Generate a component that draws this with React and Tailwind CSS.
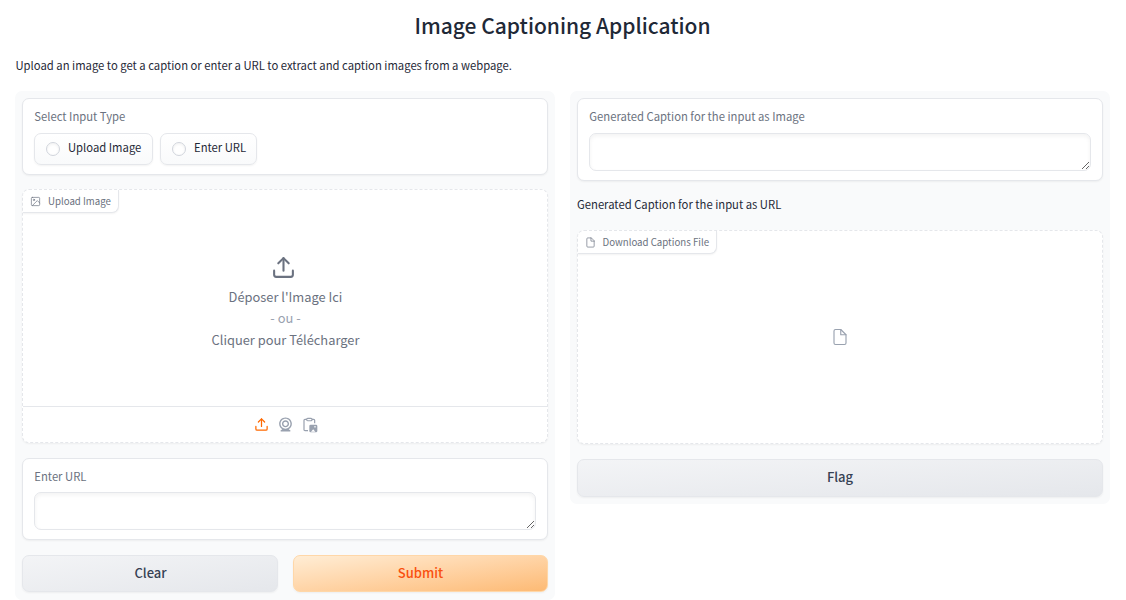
const feather = {
  viewBox: "0 0 24 24",
  fill: "none",
  stroke: "currentColor",
  strokeLinecap: "round",
  strokeLinejoin: "round",
};

function UploadIcon({ className, strokeWidth = 2 }) {
  return (
    <svg {...feather} strokeWidth={strokeWidth} className={className}>
      <path d="M21 15v4a2 2 0 0 1-2 2H5a2 2 0 0 1-2-2v-4" />
      <polyline points="17 8 12 3 7 8" />
      <line x1="12" y1="3" x2="12" y2="15" />
    </svg>
  );
}

function ImageIcon({ className }) {
  return (
    <svg {...feather} strokeWidth="1.5" className={className}>
      <rect x="3" y="3" width="18" height="18" rx="2" ry="2" />
      <circle cx="8.5" cy="8.5" r="1.5" />
      <polyline points="21 15 16 10 5 21" />
    </svg>
  );
}

function FileIcon({ className }) {
  return (
    <svg {...feather} strokeWidth="1.5" className={className}>
      <path d="M13 2H6a2 2 0 0 0-2 2v16a2 2 0 0 0 2 2h12a2 2 0 0 0 2-2V9z" />
      <polyline points="13 2 13 9 20 9" />
    </svg>
  );
}

function WebcamIcon({ className }) {
  return (
    <svg viewBox="0 0 24 24" fill="currentColor" className={className}>
      <path d="M12 2c-4.963 0-9 4.038-9 9c0 3.328 1.82 6.232 4.513 7.79l-2.067 1.378A1 1 0 0 0 6 22h12a1 1 0 0 0 .555-1.832l-2.067-1.378C19.18 17.232 21 14.328 21 11c0-4.962-4.037-9-9-9zm0 16c-3.859 0-7-3.141-7-7c0-3.86 3.141-7 7-7s7 3.14 7 7c0 3.859-3.141 7-7 7z" />
      <path d="M12 6c-2.757 0-5 2.243-5 5s2.243 5 5 5s5-2.243 5-5s-2.243-5-5-5zm0 8c-1.654 0-3-1.346-3-3s1.346-3 3-3s3 1.346 3 3s-1.346 3-3 3z" />
    </svg>
  );
}

function PasteIcon({ className }) {
  return (
    <svg viewBox="0 0 24 24" fill="none" className={className}>
      <path d="M9 20.5H4.5a1.5 1.5 0 0 1-1.500-1.500V5a1.500 1.500 0 0 1 1.500-1.500H7M15 3.500h2.500A1.500 1.500 0 0 1 19 5v4.500" stroke="currentColor" strokeWidth="1.8" />
      <rect x="7" y="2" width="8" height="3.6" rx="1.5" stroke="currentColor" strokeWidth="1.8" />
      <path fillRule="evenodd" fill="currentColor" d="M13 11.500h8a2 2 0 0 1 2 2v7.500a2 2 0 0 1-2 2h-8a2 2 0 0 1-2-2V13.500a2 2 0 0 1 2-2zM19.500 13.600a1.200 1.200 0 1 0 0 2.400a1.200 1.200 0 0 0 0-2.400zM13.500 22h6.500l-3.200-3.600z" />
    </svg>
  );
}

function Panel({ children }) {
  return <div className="flex w-[540px] flex-col rounded-[7px] bg-[#f9fafb] p-[7px]">{children}</div>;
}

function Block({ label, className, children }) {
  return (
    <div className={"rounded-[7px] border border-gray-200 bg-white px-[11px] pt-[9px] shadow-[0_1px_2px_0_rgba(0,0,0,0.05)] " + className}>
      <div className="h-[17px] pl-[0.3px] text-[11.27px] leading-[16px] text-[#6b7280]">{label}</div>
      {children}
    </div>
  );
}

function BlockLabel({ icon, children }) {
  return (
    <div className="flex h-[23px] w-fit items-center rounded-tl-[7px] rounded-br-[7px] border-r border-b border-gray-200 bg-white pr-[7px] pl-[7px] text-[9.68px] leading-[16px] text-[#6b7280] shadow-[0_1px_2px_0_rgba(0,0,0,0.05)]">
      {icon}
      {children}
    </div>
  );
}

function Radio({ children, className }) {
  return (
    <label className={"flex h-[32px] items-center rounded-[7px] border border-gray-200 bg-linear-to-t from-[#f9fafb] to-white pl-[11px] text-[11.27px] leading-[16px] text-[#1f2937] shadow-[0_1px_2px_0_rgba(0,0,0,0.05)] " + className}>
      <span className="mr-[8px] h-[14px] w-[14px] rounded-full border border-gray-300 bg-white shadow-[inset_0_1px_3px_0_rgba(0,0,0,0.06)]" />
      <span className="-mt-[4px]">{children}</span>
    </label>
  );
}

function Area({ className }) {
  return (
    <textarea className={"block h-[38px] w-full resize rounded-[7px] border border-gray-200 bg-white shadow-[inset_0_2px_4px_0_rgba(0,0,0,0.05)] outline-none " + className} />
  );
}

function Button({ className, children }) {
  return (
    <button className={"rounded-[7px] border pb-[2px] text-[13px] leading-[20px] font-medium shadow-[0_1px_2px_0_rgba(0,0,0,0.05)] " + className}>
      {children}
    </button>
  );
}

export default function App() {
  return (
    <div className="h-[600px] overflow-hidden bg-white px-[15px] font-['Noto_Sans_CJK_SC',sans-serif] text-[#1f2937]">
      <h1 className="h-[41px] pt-[10px] pr-[1px] text-center text-[21px] leading-[30px] font-medium">Image Captioning Application</h1>
      <p className="mt-[15px] pl-[0.5px] text-[11.28px] leading-[18px]">
        Upload an image to get a caption or enter a URL to extract and caption images from a webpage.
      </p>
      <div className="mt-[17px] flex items-start gap-[15px]">
        <Panel>
          <Block label="Select Input Type" className="h-[77px]">
            <div className="mt-[8px] flex gap-[7px]">
              <Radio className="w-[119px]">Upload Image</Radio>
              <Radio className="w-[97px]">Enter URL</Radio>
            </div>
          </Block>

          <div className="mt-[14px] flex h-[254px] flex-col rounded-[7px] border border-dashed border-gray-200 bg-white shadow-[0_1px_2px_0_rgba(0,0,0,0.05)]">
            <BlockLabel icon={<ImageIcon className="mr-[7px] h-[11px] w-[11px] text-[#6b7280]" />}>Upload Image</BlockLabel>
            <div className="flex flex-1 flex-col items-center pt-[42px] pl-[1px] text-[12.87px] leading-[21.4px] text-[#6b7280]">
              <UploadIcon className="mr-[4px] mb-[6px] h-[25px] w-[25px]" />
              <span>Déposer l'Image Ici</span>
              <span className="text-gray-400">- ou -</span>
              <span>Cliquer pour Télécharger</span>
            </div>
            <div className="flex h-[36px] items-center justify-center gap-[8px] border-t border-gray-200 pl-[1px] text-gray-400">
              <UploadIcon className="h-[15px] w-[15px] text-orange-500" />
              <WebcamIcon className="h-[17px] w-[17px]" />
              <PasteIcon className="h-[16px] w-[16px]" />
            </div>
          </div>

          <Block label="Enter URL" className="mt-[15px] h-[82px]">
            <Area className="mt-[7px]" />
          </Block>

          <div className="mt-[15px] mb-[1px] flex gap-[15px]">
            <Button className="h-[37px] w-[256px] border-gray-200 bg-linear-to-br from-gray-100 to-gray-200 pl-[1px] text-gray-700">Clear</Button>
            <Button className="h-[37px] w-[255px] border-orange-200 bg-linear-to-br from-[#ffedd5] to-[#fdba74] text-[#f9500f]">Submit</Button>
          </div>
        </Panel>

        <Panel>
          <Block label="Generated Caption for the input as Image" className="h-[83px]">
            <Area className="mt-[8px]" />
          </Block>
          <p className="mt-[14px] text-[11.28px] leading-[18px]">Generated Caption for the input as URL</p>
          <div className="mt-[17px] flex h-[214px] flex-col rounded-[7px] border border-dashed border-gray-200 bg-white shadow-[0_1px_2px_0_rgba(0,0,0,0.05)]">
            <BlockLabel icon={<FileIcon className="mr-[7px] -ml-[0.5px] h-[11px] w-[11px] text-[#6b7280]" />}>Download Captions File</BlockLabel>
            <div className="flex flex-1 items-center justify-center pb-[23px]">
              <FileIcon className="h-[18px] w-[18px] text-gray-400" />
            </div>
          </div>
          <Button className="mt-[15px] h-[38px] w-full border-gray-200 bg-linear-to-br from-gray-100 to-gray-200 text-gray-700">Flag</Button>
        </Panel>
      </div>
    </div>
  );
}
